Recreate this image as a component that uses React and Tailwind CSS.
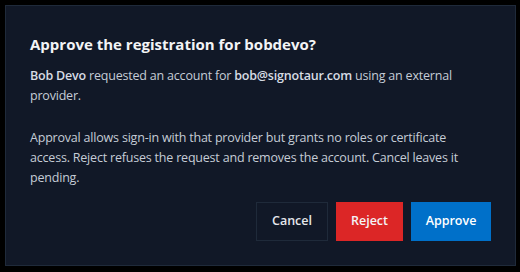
export default function App() {
  return (
    <div className="w-[520px] h-[272px] bg-black p-[5px]" style={{ fontFamily: '"Open Sans", "Noto Sans", sans-serif' }}>
      <div className="w-[511px] h-[261px] border border-[#1f2a3a] bg-[#111827] px-[24px] pt-[26px] pb-[24px] flex flex-col">
        <h2 className="text-[15px] leading-[24px] font-bold text-[#f3f4f6]">Approve the registration for bobdevo?</h2>
        <p className="mt-[10px] text-[12.5px] tracking-[-0.2px] leading-[20px] text-[#c5ccd6]">
          <span className="font-semibold text-[#d7dce4]">Bob Devo</span> requested an account for{' '}
          <span className="font-semibold text-[#d7dce4]">bob@signotaur.com</span> using an external provider.
        </p>
        <p className="mt-[22px] max-w-[445px] text-[12.5px] tracking-[-0.2px] leading-[20px] text-[#c5ccd6]">
          Approval allows sign-in with that provider but grants no roles or certificate access. Reject refuses the request and removes the account. Cancel leaves it pending.
        </p>
        <div className="mt-auto flex justify-end gap-[8px]">
          <button className="h-[39px] w-[72px] flex items-center justify-center border border-[#1f2a3a] text-[12.5px] font-semibold text-[#e5e7eb]">Cancel</button>
          <button className="h-[39px] w-[67px] flex items-center justify-center bg-[#dc2626] text-[12.5px] font-semibold text-[#f3f4f6]">Reject</button>
          <button className="h-[39px] w-[80px] flex items-center justify-center bg-[#0070c9] text-[12.5px] font-semibold text-white">Approve</button>
        </div>
      </div>
    </div>
  );
}
